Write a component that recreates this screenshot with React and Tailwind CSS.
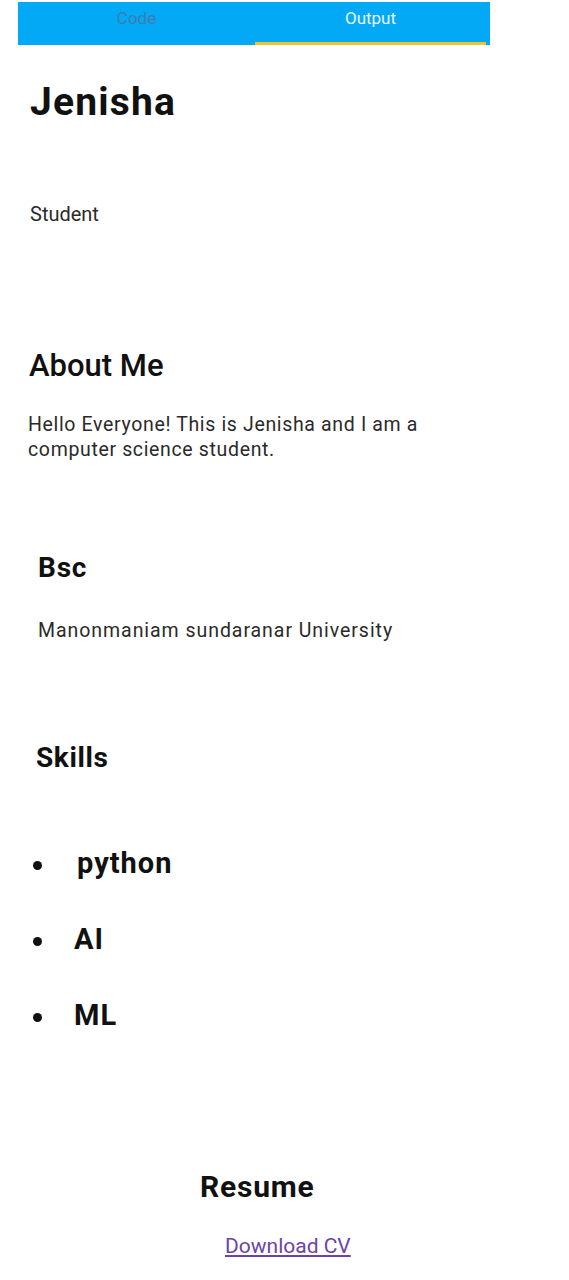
export default function App() {
  return (
    <div className="w-[569px] min-h-[1280px] bg-white" style={{ fontFamily: "Roboto, 'Liberation Sans', sans-serif" }}>
      <div className="pt-[2px] pl-[18px]">
        <div className="relative flex h-[43px] w-[472px] bg-[#03a9f4]">
          <div className="flex w-[237px] items-center justify-center pb-[10px] text-[17px] text-[#3d7fae]">Code</div>
          <div className="flex w-[235px] items-center justify-center pb-[10px] pr-[4px] text-[17px] text-[#e6f6ff]">Output</div>
          <div className="absolute bottom-0 left-[237px] h-[3px] w-[231px] bg-[#f2c12e]" />
        </div>
      </div>

      <h1 className="ml-[30px] mt-[38px] text-[39px] font-bold leading-none tracking-[1.2px] text-[#111]">Jenisha</h1>
      <p className="ml-[30px] mt-[82px] text-[20px] leading-none text-[#2a2a2a]">Student</p>

      <h2 className="ml-[29px] mt-[126px] text-[31px] font-medium leading-none text-[#111]">About Me</h2>
      <p className="ml-[28px] mt-[31px] w-[430px] text-[19.5px] leading-[25px] tracking-[0.65px] text-[#2a2a2a]">
        Hello Everyone! This is Jenisha and I am a computer science student.
      </p>

      <h2 className="ml-[38px] mt-[92px] text-[28px] font-bold leading-none tracking-[0.8px] text-[#111]">Bsc</h2>
      <p className="ml-[38px] mt-[39px] text-[19.5px] leading-none tracking-[0.95px] text-[#2a2a2a]">Manonmaniam sundaranar University</p>

      <h2 className="ml-[36px] mt-[103px] text-[28px] font-bold leading-none tracking-[0.6px] text-[#111]">Skills</h2>
      <ul className="ml-[33px] mt-[77px] flex flex-col gap-[47px]">
        {["python", "AI", "ML"].map((s) => (
          <li key={s} className="flex items-center text-[29px] font-bold leading-none tracking-[1px] text-[#111]">
            <span className="mt-[4px] mr-[32px] h-[9px] w-[9px] rounded-full bg-[#111]" />
            <span className={s === "python" ? "ml-[3px]" : ""}>{s}</span>
          </li>
        ))}
      </ul>

      <h2 className="ml-[200px] mt-[142px] text-[30px] font-bold leading-none tracking-[0.8px] text-[#111]">Resume</h2>
      <div className="ml-[225px] mt-[34px]">
        <a href="#" className="text-[21px] leading-none text-[#6b44a8] underline">Download CV</a>
      </div>
    </div>
  );
}
